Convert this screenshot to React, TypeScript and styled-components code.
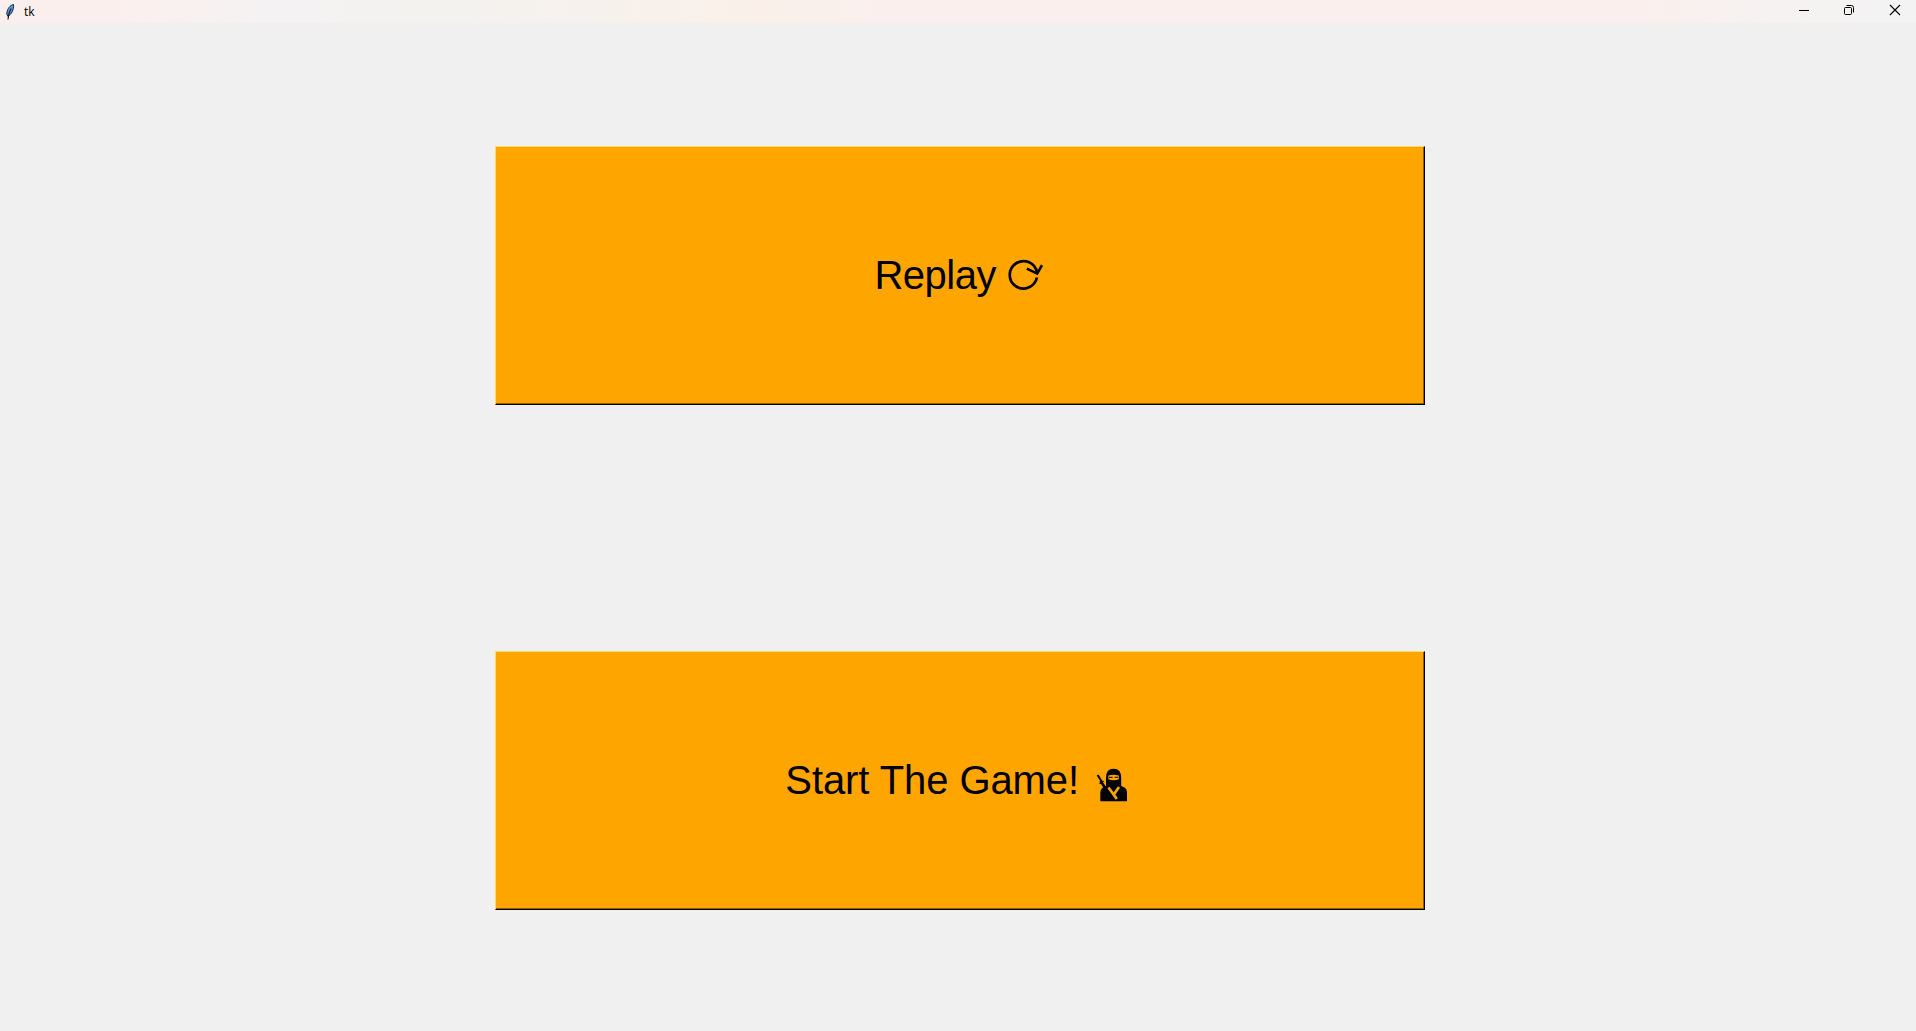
import React from "react";
import styled, { createGlobalStyle } from "styled-components";

const GlobalStyle = createGlobalStyle`
  html, body { margin: 0; padding: 0; overflow: hidden; }
  * { box-sizing: border-box; }
`;

const Window = styled.div`
  display: flex;
  flex-direction: column;
  width: 100vw;
  height: 100vh;
  background: #f0f0f0;
`;

const TitleBar = styled.header`
  display: flex;
  align-items: center;
  height: 23px;
  flex: none;
  background: linear-gradient(90deg, #fbefed 0, #fbefed 110px, #f4f2f3 270px, #f3f2ef 440px, #faf0e9 760px, #faefed 900px, #faefed 1640px, #f5f2f1 1780px, #f3f3f3 1916px);
`;

const AppIcon = styled.svg`
  width: 16px;
  height: 22px;
  margin-left: 2px;
`;

const Title = styled.span`
  margin: 1px 0 0 6px;
  font: 12px/16px "Open Sans", "Noto Sans", sans-serif;
  color: #000;
`;

const Controls = styled.div`
  display: flex;
  margin-left: auto;
`;

const Control = styled.button`
  display: flex;
  align-items: center;
  justify-content: center;
  width: 45.5px;
  height: 23px;
  padding: 0 0 3px 3px;
  border: 0;
  background: none;
`;

const Body = styled.main`
  flex: 1;
  display: flex;
  flex-direction: column;
  align-items: center;
  gap: 246px;
  padding: 123px 0 0 4px;
`;

const BigButton = styled.button<{ $inset: number }>`
  display: flex;
  align-items: center;
  justify-content: center;
  width: 930px;
  height: 259px;
  flex: none;
  padding: 0 ${(p) => p.$inset}px 0 0;
  border: 1px solid;
  border-color: #ffdb67 #000 #000 #ffdb67;
  box-shadow: inset -1px -1px 0 #945f00;
  background: #ffa500;
  color: #000;
  font: 40px/46px "Liberation Sans", Arial, sans-serif;
`;

const Label = styled.span<{ $spacing: number }>`
  padding-bottom: 2px;
  letter-spacing: ${(p) => p.$spacing}px;
  white-space: pre;
`;

const Glyph = styled.svg<{ $left: number; $top: number }>`
  margin: ${(p) => p.$top}px 0 0 ${(p) => p.$left}px;
  flex: none;
`;

export default function App() {
  return (
    <Window>
      <GlobalStyle />
      <TitleBar>
        <AppIcon viewBox="0 0 16 22">
          <path d="M11.5 3.5 C8.5 4 5 7.5 4.8 13 L6 15.5 C9.5 13 12 9 11.5 3.5Z" fill="#4f9af0" stroke="#1b2430" strokeWidth="1" />
          <path d="M9.3 7.5 C7.6 10 6.5 13 6 18.5" fill="none" stroke="#111" strokeWidth="1.1" />
        </AppIcon>
        <Title>tk</Title>
        <Controls>
          <Control aria-label="Minimize">
            <svg width="12" height="12"><path d="M1 6.5H11" stroke="#000" /></svg>
          </Control>
          <Control aria-label="Restore">
            <svg width="12" height="12" fill="none" stroke="#000">
              <rect x="1.5" y="3.5" width="7" height="7" rx="1" />
              <path d="M3.5 1.5H8.5Q10.5 1.5 10.5 3.5V8.5" />
            </svg>
          </Control>
          <Control aria-label="Close">
            <svg width="12" height="12"><path d="M1 1L11 11M11 1L1 11" stroke="#000" strokeWidth="1.1" /></svg>
          </Control>
        </Controls>
      </TitleBar>
      <Body>
        <BigButton $inset={2.4}>
          <Label $spacing={-0.5}>Replay</Label>
          <Glyph $left={11.2} $top={-1} width="36" height="34" viewBox="0 0 36 34" fill="none" stroke="#000">
            <path d="M29.9 19.6A13.7 13.7 0 1 1 30 14.6" strokeWidth="2.7" />
            <path d="M19.8 10.6L30.2 15.6L35 7.2" strokeWidth="2.6" />
          </Glyph>
        </BigButton>
        <BigButton $inset={6.5}>
          <Label $spacing={-0.08}>Start The Game!</Label>
          <Glyph $left={17.2} $top={9} width="32" height="34" viewBox="0 0 32 34">
            <path d="M10 10Q10 .8 17.6 .8Q25.2 .8 25.2 10V18L28.5 19.5Q31 21 31 25V33.2H4.3V25Q4.3 21 7 19.5L10 18Z" />
            <path d="M12.4 7.5Q17.6 5.8 22.8 7.5V11.2Q17.6 13.4 12.4 11.2Z" fill="#ffa500" />
            <path d="M13 9.3h3.6M18.6 9.3h3.6" stroke="#000" />
            <path d="M12.5 19.5L20.8 31M23 19L17.8 26.5" stroke="#ffa500" strokeWidth="2.7" fill="none" />
            <path d="M1.6 7L6 14" stroke="#000" strokeWidth="2" />
            <path d="M4.5 13L13 25.5" stroke="#000" strokeWidth="2.6" />
            <path d="M3.6 15.8L7.6 13" stroke="#000" strokeWidth="1.4" />
          </Glyph>
        </BigButton>
      </Body>
    </Window>
  );
}
